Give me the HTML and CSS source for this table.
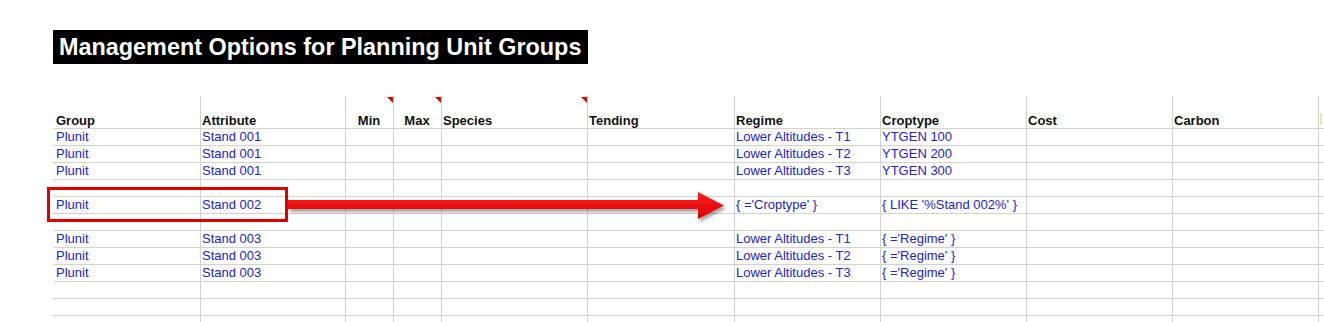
FILE: index.html
```html
<!DOCTYPE html>
<html>
<head>
<meta charset="utf-8">
<title>Management Options for Planning Unit Groups</title>
<link rel="stylesheet" href="styles.css">
</head>
<body>
<div class="page">
  <div class="sheet">
    <div class="title">Management Options for Planning Unit Groups</div>
    <div class="grid">
      <div class="row head">
        <div class="cell">Group</div>
        <div class="cell">Attribute</div>
        <div class="cell center">Min<span class="note"></span></div>
        <div class="cell center">Max<span class="note"></span></div>
        <div class="cell">Species<span class="note"></span></div>
        <div class="cell">Tending</div>
        <div class="cell">Regime</div>
        <div class="cell">Croptype</div>
        <div class="cell">Cost</div>
        <div class="cell">Carbon</div>
        <div class="cell"><span class="mark"></span></div>
      </div>
      <div class="row"><div class="cell">Plunit</div><div class="cell">Stand 001</div><div class="cell"></div><div class="cell"></div><div class="cell"></div><div class="cell"></div><div class="cell">Lower Altitudes - T1</div><div class="cell">YTGEN 100</div><div class="cell"></div><div class="cell"></div><div class="cell"></div></div>
      <div class="row"><div class="cell">Plunit</div><div class="cell">Stand 001</div><div class="cell"></div><div class="cell"></div><div class="cell"></div><div class="cell"></div><div class="cell">Lower Altitudes - T2</div><div class="cell">YTGEN 200</div><div class="cell"></div><div class="cell"></div><div class="cell"></div></div>
      <div class="row"><div class="cell">Plunit</div><div class="cell">Stand 001</div><div class="cell"></div><div class="cell"></div><div class="cell"></div><div class="cell"></div><div class="cell">Lower Altitudes - T3</div><div class="cell">YTGEN 300</div><div class="cell"></div><div class="cell"></div><div class="cell"></div></div>
      <div class="row"><div class="cell"></div><div class="cell"></div><div class="cell"></div><div class="cell"></div><div class="cell"></div><div class="cell"></div><div class="cell"></div><div class="cell"></div><div class="cell"></div><div class="cell"></div><div class="cell"></div></div>
      <div class="row"><div class="cell">Plunit</div><div class="cell">Stand 002</div><div class="cell"></div><div class="cell"></div><div class="cell"></div><div class="cell"></div><div class="cell">{ ='Croptype' }</div><div class="cell">{ LIKE '%Stand 002%' }</div><div class="cell"></div><div class="cell"></div><div class="cell"></div></div>
      <div class="row"><div class="cell"></div><div class="cell"></div><div class="cell"></div><div class="cell"></div><div class="cell"></div><div class="cell"></div><div class="cell"></div><div class="cell"></div><div class="cell"></div><div class="cell"></div><div class="cell"></div></div>
      <div class="row"><div class="cell">Plunit</div><div class="cell">Stand 003</div><div class="cell"></div><div class="cell"></div><div class="cell"></div><div class="cell"></div><div class="cell">Lower Altitudes - T1</div><div class="cell">{ ='Regime' }</div><div class="cell"></div><div class="cell"></div><div class="cell"></div></div>
      <div class="row"><div class="cell">Plunit</div><div class="cell">Stand 003</div><div class="cell"></div><div class="cell"></div><div class="cell"></div><div class="cell"></div><div class="cell">Lower Altitudes - T2</div><div class="cell">{ ='Regime' }</div><div class="cell"></div><div class="cell"></div><div class="cell"></div></div>
      <div class="row"><div class="cell">Plunit</div><div class="cell">Stand 003</div><div class="cell"></div><div class="cell"></div><div class="cell"></div><div class="cell"></div><div class="cell">Lower Altitudes - T3</div><div class="cell">{ ='Regime' }</div><div class="cell"></div><div class="cell"></div><div class="cell"></div></div>
      <div class="row"><div class="cell"></div><div class="cell"></div><div class="cell"></div><div class="cell"></div><div class="cell"></div><div class="cell"></div><div class="cell"></div><div class="cell"></div><div class="cell"></div><div class="cell"></div><div class="cell"></div></div>
      <div class="row"><div class="cell"></div><div class="cell"></div><div class="cell"></div><div class="cell"></div><div class="cell"></div><div class="cell"></div><div class="cell"></div><div class="cell"></div><div class="cell"></div><div class="cell"></div><div class="cell"></div></div>
      <div class="row"><div class="cell"></div><div class="cell"></div><div class="cell"></div><div class="cell"></div><div class="cell"></div><div class="cell"></div><div class="cell"></div><div class="cell"></div><div class="cell"></div><div class="cell"></div><div class="cell"></div></div>
    </div>
  </div>
  <svg class="overlay" width="1324" height="322" viewBox="0 0 1324 322" xmlns="http://www.w3.org/2000/svg">
    <defs>
      <linearGradient id="shaft" x1="0" y1="0" x2="0" y2="1">
        <stop offset="0" stop-color="#ff2020"/>
        <stop offset="1" stop-color="#d80000"/>
      </linearGradient>
      <filter id="shadow" x="-5%" y="-50%" width="110%" height="200%">
        <feDropShadow dx="2" dy="3" stdDeviation="1.6" flood-color="#000" flood-opacity="0.35"/>
      </filter>
    </defs>
    <rect x="48.5" y="188.5" width="238" height="32" fill="none" stroke="#e10000" stroke-width="3"/>
    <path d="M288 200 H698 V192 L724 205.5 L698 219 V209 H288 Z" fill="url(#shaft)" filter="url(#shadow)"/>
  </svg>
</div>
</body>
</html>
```

FILE: styles.css
```css
* {
  box-sizing: border-box;
}

html, body {
  margin: 0;
  padding: 0;
  background: #ffffff;
}

body {
  width: 1324px;
  height: 322px;
  overflow: hidden;
  font-family: "Liberation Sans", Arial, sans-serif;
}

.page {
  position: relative;
  width: 1324px;
  height: 322px;
  overflow: hidden;
}

.sheet {
  padding-left: 53px;
  padding-top: 30px;
}

.title {
  width: 535px;
  height: 34px;
  background: #000000;
  color: #ffffff;
  font-weight: bold;
  font-size: 23.4px;
  line-height: 34px;
  padding-left: 6px;
  white-space: nowrap;
}

.grid {
  margin-top: 32px;
  width: 1366px;
}

.row {
  display: grid;
  grid-template-columns: 148px 145px 48px 48px 146px 147px 146px 146px 146px 146px 100px;
  height: 17px;
}

.cell {
  position: relative;
  border-right: 1px solid #d2d2d2;
  border-bottom: 1px solid #d2d2d2;
  padding: 0 2px 0 1px;
  font-size: 13px;
  line-height: 16px;
  color: #2323c6;
  white-space: nowrap;
  overflow: visible;
}

.cell:first-child {
  padding-left: 3px;
}

.row.head {
  height: 33px;
}

.head .cell {
  display: flex;
  align-items: flex-end;
  color: #111111;
  font-weight: bold;
  line-height: 15px;
}

.head .cell.center {
  justify-content: center;
}

.note {
  position: absolute;
  top: 1px;
  right: 0;
  width: 0;
  height: 0;
  border-top: 6px solid #e00000;
  border-left: 6px solid transparent;
}

.mark {
  position: absolute;
  left: 1px;
  top: 17px;
  width: 2px;
  height: 12px;
  background: #f5e2a8;
}

.overlay {
  position: absolute;
  left: 0;
  top: 0;
  pointer-events: none;
}
```
